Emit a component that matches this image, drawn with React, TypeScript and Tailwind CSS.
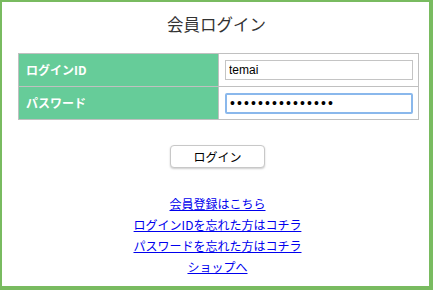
const links = [
  '会員登録はこちら',
  'ログインIDを忘れた方はコチラ',
  'パスワードを忘れた方はコチラ',
  'ショップへ',
]

export default function App() {
  return (
    <div
      className="w-[433px] h-[290px] bg-white border-t-[2px] border-l-[2px] border-r-[4px] border-b-[4px] border-[#79bb60] text-[#333]"
      style={{ fontFamily: '"Noto Sans CJK JP", "Liberation Sans", sans-serif' }}
    >
      <h1 className="text-center text-[16.5px] leading-[20px] pt-[12px] pl-[2px] text-[#333]">会員ログイン</h1>
      <table className="mt-[19px] ml-[16px] w-[401px] border-collapse text-[12px]">
        <tbody>
          <tr className="h-[33px]">
            <th className="w-[200px] border border-[#c0c0c0] bg-[#66cc99] text-left pl-[7px] font-bold text-white">
              ログインID
            </th>
            <td className="border border-[#c0c0c0] pl-[6px] pr-[5px]">
              <input
                defaultValue="temai"
                className="w-full h-[20px] border border-[#c4c4c4] px-[3px] text-[12px] text-black outline-none"
                style={{ fontFamily: '"Liberation Sans", sans-serif' }}
              />
            </td>
          </tr>
          <tr className="h-[33px]">
            <th className="border border-[#c0c0c0] bg-[#66cc99] text-left pl-[7px] font-bold text-white">
              パスワード
            </th>
            <td className="border border-[#c0c0c0] pl-[6px] pr-[5px]">
              <input
                type="password"
                defaultValue="aaaaaaaaaaaaaaa"
                className="w-full h-[21px] border-2 border-[#8ab8ec] rounded-[2px] px-[3px] text-[14px] tracking-[2.1px] text-black outline-none"
                style={{ fontFamily: '"Liberation Sans", sans-serif' }}
              />
            </td>
          </tr>
        </tbody>
      </table>
      <div className="flex justify-center mt-[25px] pl-[4px]">
        <button className="w-[95px] h-[23px] rounded-[4px] border border-[#c8c8c8] bg-white shadow-[0_1px_2px_rgba(0,0,0,0.2)] text-[12px] text-black">
          ログイン
        </button>
      </div>
      <div className="flex flex-col items-center mt-[27px] pl-[4px] gap-[4px] text-[12px] leading-[17px]">
        {links.map((l) => (
          <a key={l} href="#" className="text-[#0000ee] underline">
            {l}
          </a>
        ))}
      </div>
    </div>
  )
}
